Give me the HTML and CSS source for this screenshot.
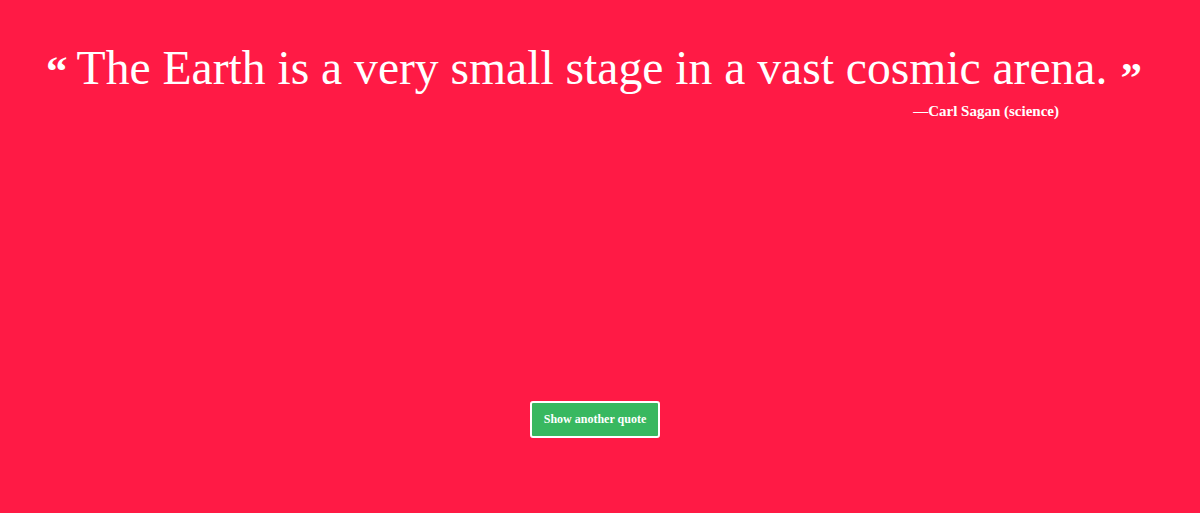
FILE: index.html
```html
<!DOCTYPE html>
<html lang="en">
<head>
<meta charset="utf-8">
<title>Random Quote</title>
<link rel="stylesheet" href="styles.css">
</head>
<body>
<main class="page">
  <section class="quote-box">
    <blockquote class="quote">
      <span class="mark mark-open">&#8220;</span>
      <span class="quote-text">The Earth is a very small stage in a vast cosmic arena.</span>
      <span class="mark mark-close">&#8221;</span>
    </blockquote>
    <p class="author">&mdash;Carl Sagan (science)</p>
  </section>
  <div class="actions">
    <button class="btn" type="button">Show another quote</button>
  </div>
</main>
</body>
</html>
```

FILE: styles.css
```css
html, body {
  margin: 0;
  height: 100%;
}
body {
  background: #ff1a45;
  color: #fff;
  font-family: "Liberation Serif", "Times New Roman", serif;
}
.page {
  height: 100%;
  display: flex;
  flex-direction: column;
  padding: 38px 0 0;
  box-sizing: border-box;
}
.quote-box {
  display: flex;
  flex-direction: column;
}
.quote {
  margin: 0;
  display: flex;
  justify-content: center;
  align-items: flex-start;
  height: 60px;
  padding-right: 12px;
}
.quote-text {
  font-size: 47.6px;
  line-height: 60px;
  margin: 0 13px 0 9px;
}
.mark {
  font-size: 43px;
  font-weight: bold;
  line-height: 30px;
}
.mark-open {
  margin-top: 18px;
}
.mark-close {
  margin-top: 25px;
}
.author {
  margin: 3px 141px 0 0;
  align-self: flex-end;
  font-size: 15px;
  font-weight: bold;
  line-height: 20px;
}
.actions {
  display: flex;
  justify-content: center;
  padding-right: 10px;
  margin-top: 280px;
}
.btn {
  background: #38b860;
  color: #fff;
  border: 2px solid #fff;
  border-radius: 3px;
  width: 130px;
  height: 37px;
  font-family: "Liberation Serif", "Times New Roman", serif;
  font-size: 12px;
  font-weight: bold;
  cursor: pointer;
}
```
